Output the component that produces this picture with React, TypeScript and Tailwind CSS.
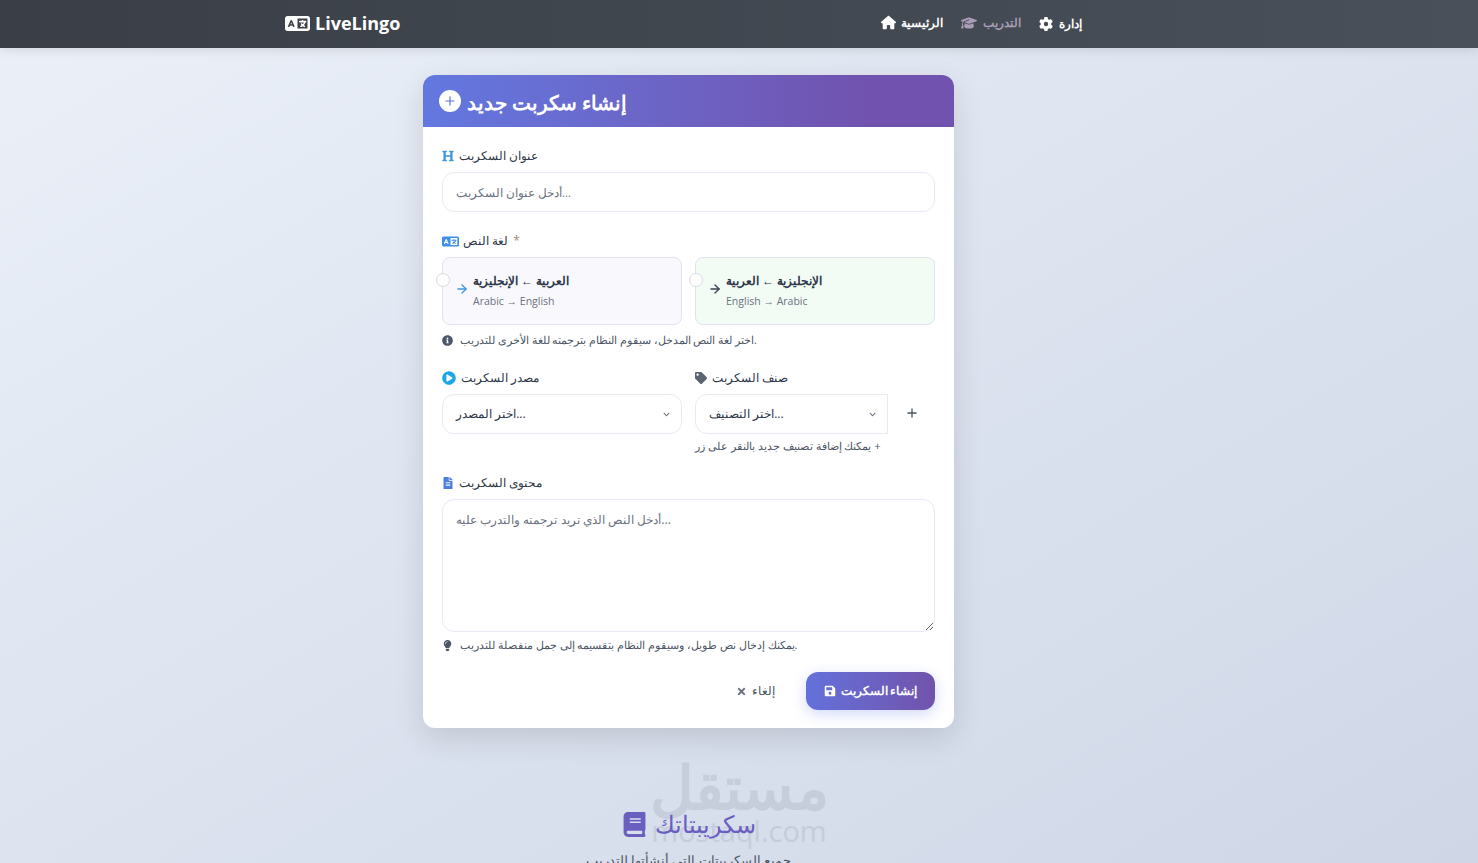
import React from "react";
import {
  FaHeading,
  FaInfoCircle,
  FaPlayCircle,
  FaTag,
  FaFileAlt,
  FaLightbulb,
  FaSave,
  FaTimes,
  FaBook,
  FaChevronDown,
} from "react-icons/fa";
import { FaHouse, FaGraduationCap, FaGear, FaLanguage } from "react-icons/fa6";
import { ArrowRight, Plus } from "lucide-react";

function Label({ icon, children }: { icon: React.ReactNode; children: React.ReactNode }) {
  return (
    <label className="flex items-center gap-[5px] h-[16px] text-[12px] font-medium text-[#2d3748] mb-[8px]">
      {icon}
      <span>{children}</span>
    </label>
  );
}

function LangOption({ title, sub, arrow, tint }: { title: string; sub: string; arrow: string; tint: string }) {
  return (
    <div className={`relative flex-1 h-[68px] rounded-[8px] border border-[#dfe3f0] flex items-center pl-[12px] ${tint}`}>
      <span className="absolute left-[-7px] top-[15px] w-[14px] h-[14px] rounded-full bg-white border border-[#d5d9e2]" />
      <ArrowRight size={14} strokeWidth={2.25} className={`mb-[4px] ${arrow}`} />
      <div className="ml-[4px] mb-[4px]">
        <div className="text-[12px] font-bold text-[#2d3748] leading-[20px]">{title}</div>
        <div className="text-[10.5px] text-[#6b7280] leading-[14px] mt-[3px]">{sub}</div>
      </div>
    </div>
  );
}

function SelectBox({ text, className }: { text: string; className: string }) {
  return (
    <div className={`h-[40px] bg-white border border-[#e6ebf3] flex items-center justify-between pl-[13px] pr-[11px] text-[12px] text-[#2d3748] ${className}`}>
      <span>{text}</span>
      <FaChevronDown size={7} className="text-[#6b7280]" />
    </div>
  );
}

export default function App() {
  return (
    <div
      className="relative h-screen overflow-hidden bg-gradient-to-br from-[#ebf0f8] to-[#cfd7e7] text-[#2d3748]"
      style={{ fontFamily: '"Open Sans", "Noto Sans", sans-serif' }}
    >
      {/* Navbar */}
      <nav className="h-[48px] bg-gradient-to-r from-[#3a3f47] to-[#495059] shadow-[0_2px_10px_rgba(0,0,0,0.1)] flex items-center pl-[285px] pr-[396px] justify-between">
        <div className="flex items-center gap-[5px] text-white text-[18px] font-bold -mt-[1px]">
          <FaLanguage size={25} />
          LiveLingo
        </div>
        <div className="flex items-center gap-[18px] text-[11.5px] font-semibold">
          <a className="flex items-center gap-[5px] text-white -mt-[3px]">
            <FaHouse size={15} />
            الرئيسية
          </a>
          <a className="flex items-center gap-[6px] text-[#a99cb6] -mt-[3px]">
            <FaGraduationCap size={16} />
            التدريب
          </a>
          <a className="flex items-center gap-[6px] text-white">
            <FaGear size={14} />
            إدارة
          </a>
        </div>
      </nav>

      {/* Card */}
      <main className="flex justify-center pt-[27px] pr-[101px]">
        <div className="w-[531px] h-[653px] bg-white rounded-[12px] shadow-[0_10px_30px_rgba(0,0,0,0.12)] overflow-hidden">
          <div className="h-[52px] bg-gradient-to-r from-[#6278e0] to-[#7152ae] to-85% flex items-center gap-[6px] pl-[16px] text-white text-[20.2px] font-semibold">
            <span className="w-[22px] h-[22px] rounded-full bg-white flex items-center justify-center">
              <Plus size={14} strokeWidth={2} className="text-[#5b74d8]" />
            </span>
            <span className="pt-[3px]">إنشاء سكربت جديد</span>
          </div>

          <div className="px-[19px] pt-[21px]">
            <Label icon={<FaHeading size={12} className="text-[#3f95e0]" />}>عنوان السكربت</Label>
            <input
              placeholder="أدخل عنوان السكربت..."
              className="w-full h-[40px] border border-[#e6ebf3] rounded-[12px] px-[13px] text-[11.5px] placeholder:text-[#6b7280] outline-none"
            />

            <div className="mt-[21px]">
              <label className="flex items-center gap-[4px] h-[16px] text-[12px] font-medium text-[#2d3748] mb-[8px]">
                <FaLanguage size={17} className="text-[#3f8fe8]" />
                <span>لغة النص</span>
                <span className="text-[#a58a7a] ml-[1px]">*</span>
              </label>
              <div className="flex gap-[13px]">
                <LangOption title="العربية ← الإنجليزية" sub="Arabic → English" arrow="text-[#3f95e0]" tint="bg-[#f8f8fd]" />
                <LangOption title="الإنجليزية ← العربية" sub="English → Arabic" arrow="text-[#374151]" tint="bg-[#f3fbf5]" />
              </div>
              <div className="flex items-center gap-[7px] mt-[8px] text-[10.7px] text-[#4b5563] h-[14px]">
                <FaInfoCircle size={11} className="text-[#4a5568]" />
                اختر لغة النص المدخل، سيقوم النظام بترجمته للغة الأخرى للتدريب.
              </div>
            </div>

            <div className="flex gap-[13px] mt-[23px]">
              <div className="flex-1">
                <Label icon={<FaPlayCircle size={14} className="text-[#1ea7e8]" />}>مصدر السكربت</Label>
                <SelectBox text="اختر المصدر..." className="rounded-[12px]" />
              </div>
              <div className="flex-1">
                <Label icon={<FaTag size={12} className="text-[#5b6472]" />}>صنف السكربت</Label>
                <div className="flex">
                  <SelectBox text="اختر التصنيف..." className="w-[193px] rounded-l-[12px]" />
                  <div className="flex-1 flex items-center justify-center text-[#4b5563] pb-[2px]">
                    <Plus size={14} strokeWidth={2.25} />
                  </div>
                </div>
                <div className="mt-[4px] h-[14px] text-[11.2px] text-[#4b5563]">يمكنك إضافة تصنيف جديد بالنقر على زر +</div>
              </div>
            </div>

            <div className="mt-[23px]">
              <Label icon={<FaFileAlt size={12} className="text-[#4a7fe0]" />}>محتوى السكربت</Label>
              <textarea
                placeholder="أدخل النص الذي تريد ترجمته والتدرب عليه..."
                className="block w-full h-[133px] border border-[#e6ebf3] rounded-[12px] px-[13px] py-[11px] text-[12.3px] placeholder:text-[#6b7280] outline-none"
              />
              <div className="flex items-center gap-[7px] mt-[6px] h-[14px] text-[11px] text-[#4b5563]">
                <FaLightbulb size={11} className="text-[#4a5568]" />
                يمكنك إدخال نص طويل، وسيقوم النظام بتقسيمه إلى جمل منفصلة للتدريب.
              </div>
            </div>

            <div className="flex justify-end items-center gap-[31px] mt-[20px]">
              <button className="flex items-center gap-[5px] text-[12px] font-medium text-[#4b5563]">
                <FaTimes size={11} className="text-[#6b7280]" />
                إلغاء
              </button>
              <button className="w-[129px] h-[38px] rounded-[12px] bg-gradient-to-r from-[#6371db] to-[#7053ab] text-white text-[11.5px] font-semibold flex items-center justify-center gap-[5px] shadow-[0_4px_14px_rgba(102,126,234,0.3)]">
                <FaSave size={12} />
                إنشاء السكربت
              </button>
            </div>
          </div>
        </div>
      </main>

      {/* Watermark */}
      <div className="absolute left-[650px] top-[750px] w-[178px] text-center pointer-events-none text-[#8b93a3] opacity-[0.22] font-black">
        <div className="text-[60px] leading-[72px]">مستقل</div>
        <div className="text-[29px] leading-[18px] font-medium">mostaql.com</div>
      </div>

      {/* Scripts heading */}
      <section className="relative mt-[80px] pr-[101px] flex flex-col items-center">
        <div className="flex items-center gap-[8px] text-[#6a5fc1] text-[24px] font-medium h-[32px]">
          <FaBook size={25} />
          سكريبتاتك
        </div>
        <p className="mt-[12px] text-[12.5px] text-[#4b5563]">جميع السكريبتات التي أنشأتها للتدريب</p>
      </section>
    </div>
  );
}
